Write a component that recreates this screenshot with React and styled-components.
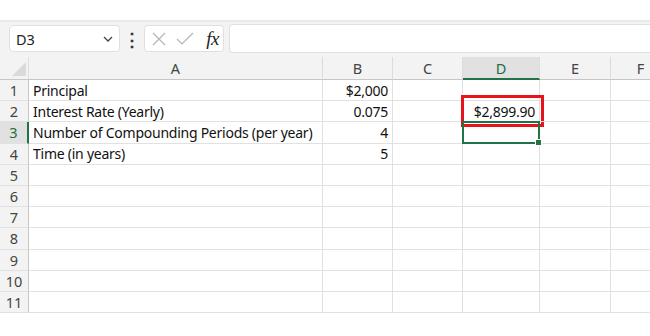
import React from 'react';
import styled, { createGlobalStyle } from 'styled-components';

const GlobalStyle = createGlobalStyle`
  body {
    margin: 0;
    background: #fff;
    font-family: "Noto Sans", "Open Sans", sans-serif;
  }
`;

const columns = [
  { key: 'A', width: 294 },
  { key: 'B', width: 70 },
  { key: 'C', width: 70 },
  { key: 'D', width: 77 },
  { key: 'E', width: 71 },
  { key: 'F', width: 60 },
];

const rows = [
  { A: 'Principal', B: '$2,000' },
  { A: 'Interest Rate (Yearly)', B: '0.075', D: '$2,899.90', flagged: true },
  { A: 'Number of Compounding Periods (per year)', B: '4' },
  { A: 'Time (in years)', B: '5' },
  {}, {}, {}, {}, {}, {}, {},
];

const activeCol = 'D';
const activeRow = 3;

const App = () => {
  return (
    <>
      <GlobalStyle />
      <Page>
        <Toolbar>
          <NameBox>
            <span>D3</span>
            <Chevron viewBox="0 0 10 6">
              <path d="M1 1l4 4 4-4" />
            </Chevron>
          </NameBox>
          <Dots>⋮</Dots>
          <FormulaButtons>
            <svg width="14" height="14" viewBox="0 0 14 14">
              <path d="M1 1l12 12M13 1L1 13" stroke="#b5b5b5" strokeWidth="1.2" fill="none" />
            </svg>
            <svg width="18" height="14" viewBox="0 0 18 14">
              <path d="M1 7l5 5L17 1" stroke="#b5b5b5" strokeWidth="1.2" fill="none" />
            </svg>
            <Fx>fx</Fx>
          </FormulaButtons>
          <FormulaBar />
        </Toolbar>

        <Grid>
          <Corner>
            <svg width="14" height="14" viewBox="0 0 14 14">
              <path d="M14 0V14H0Z" fill="#dadada" />
            </svg>
          </Corner>
          {columns.map((c) => (
            <ColHeader key={c.key} $active={c.key === activeCol}>
              {c.key}
            </ColHeader>
          ))}

          {rows.map((r, i) => {
            const n = i + 1;
            return (
              <React.Fragment key={n}>
                <RowHeader $active={n === activeRow}>{n}</RowHeader>
                {columns.map((c) => {
                  const val = r[c.key];
                  const numeric = c.key !== 'A';
                  return (
                    <Cell key={c.key} $numeric={numeric}>
                      {val}
                      {c.key === 'D' && r.flagged && <Callout />}
                      {c.key === activeCol && n === activeRow && (
                        <Selection>
                          <Handle />
                        </Selection>
                      )}
                    </Cell>
                  );
                })}
              </React.Fragment>
            );
          })}
        </Grid>
      </Page>
    </>
  );
};

export default App;

const Page = styled.div`
  width: 650px;
  height: 336px;
  padding-top: 20px;
  box-sizing: border-box;
  overflow: hidden;
  background: #fff;
`;

const Toolbar = styled.div`
  display: flex;
  align-items: center;
  height: 37px;
  padding: 0 0 2px 9px;
  box-sizing: border-box;
  background: #f3f3f3;
  border-top: 2px solid #e9e9e9;
`;

const NameBox = styled.div`
  display: flex;
  align-items: center;
  justify-content: space-between;
  width: 111px;
  height: 27px;
  padding: 0 6px 0 6px;
  box-sizing: border-box;
  background: #fff;
  border: 1px solid #e0e0e0;
  border-radius: 4px;
  font-size: 14.5px;
  letter-spacing: -0.2px;
  color: #222;
`;

const Chevron = styled.svg`
  width: 10px;
  height: 6px;
  fill: none;
  stroke: #444;
  stroke-width: 1.3;
`;

const Dots = styled.div`
  width: 24px;
  text-align: center;
  font-size: 18px;
  font-weight: bold;
  color: #333;
`;

const FormulaButtons = styled.div`
  display: flex;
  align-items: center;
  gap: 10px;
  width: 80px;
  height: 27px;
  padding: 0 4px 0 7px;
  box-sizing: border-box;
  background: #fff;
  border: 1px solid #e0e0e0;
  border-radius: 4px;
`;

const Fx = styled.span`
  margin-left: auto;
  font-family: "Liberation Serif", "DejaVu Serif", serif;
  font-style: italic;
  font-size: 19px;
  color: #222;
  letter-spacing: -0.5px;
`;

const FormulaBar = styled.div`
  flex: 1;
  height: 27px;
  margin-left: 5px;
  background: #fff;
  border: 1px solid #e0e0e0;
  border-right: none;
  border-radius: 4px 0 0 4px;
`;

const Grid = styled.div`
  display: grid;
  grid-template-columns: 29px ${columns.map((c) => `${c.width}px`).join(' ')};
  grid-template-rows: 23px repeat(11, 21.2px);
`;

const Corner = styled.div`
  display: flex;
  align-items: flex-end;
  justify-content: flex-end;
  padding: 0 2px 3px 0;
  background: #f3f3f3;
  border-right: 1px solid #dcdcdc;
  border-bottom: 1px solid #c6c6c6;
`;

const ColHeader = styled.div`
  display: flex;
  align-items: center;
  justify-content: center;
  background: ${(p) => (p.$active ? '#e1e1e1' : '#f3f3f3')};
  color: ${(p) => (p.$active ? '#1e6e42' : '#444')};
  border-right: 1px solid #dcdcdc;
  border-bottom: ${(p) => (p.$active ? '2px solid #217346' : '1px solid #c6c6c6')};
  font-size: 14.5px;
`;

const RowHeader = styled.div`
  display: flex;
  align-items: center;
  justify-content: center;
  background: ${(p) => (p.$active ? '#e1e1e1' : '#f3f3f3')};
  color: ${(p) => (p.$active ? '#1e6e42' : '#444')};
  border-right: ${(p) => (p.$active ? '2px solid #217346' : '1px solid #c6c6c6')};
  border-bottom: 1px solid #e1e1e1;
  font-size: 14.5px;
`;

const Cell = styled.div`
  position: relative;
  display: flex;
  align-items: center;
  justify-content: ${(p) => (p.$numeric ? 'flex-end' : 'flex-start')};
  padding: 0 4px;
  border-right: 1px solid #e1e1e1;
  border-bottom: 1px solid #e1e1e1;
  font-size: 14px;
  letter-spacing: -0.25px;
  color: #111;
  white-space: nowrap;
`;

const Callout = styled.div`
  position: absolute;
  top: -6px;
  bottom: -6px;
  left: -2px;
  right: -5px;
  border: 3px solid #e8141c;
  pointer-events: none;
`;

const Selection = styled.div`
  position: absolute;
  top: -1px;
  bottom: -1px;
  left: -1px;
  right: -1px;
  border: 2px solid #217346;
  z-index: 2;
`;

const Handle = styled.div`
  position: absolute;
  right: -4px;
  bottom: -4px;
  width: 5px;
  height: 5px;
  background: #217346;
  border: 1px solid #fff;
`;
